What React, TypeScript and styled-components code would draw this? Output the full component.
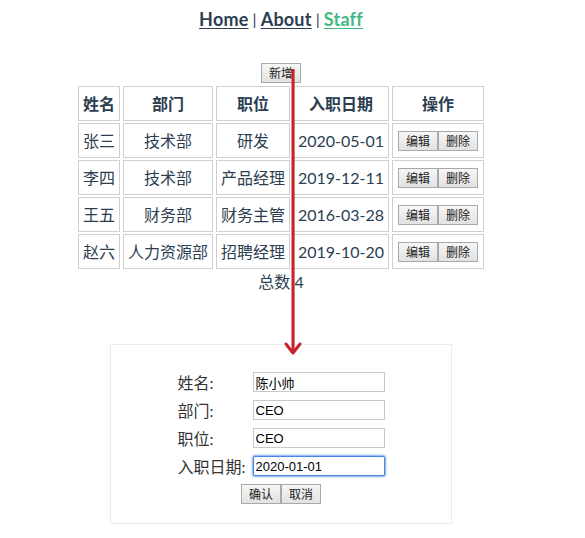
import React from "react";
import styled, { createGlobalStyle } from "styled-components";

const Global = createGlobalStyle`
  html, body { margin: 0; padding: 0; background: #fff; }
  body { font-family: Lato, "Noto Sans CJK SC", sans-serif; color: #2c3e50; }
`;

const Page = styled.div`
  position: relative;
  width: 562px;
  padding-top: 8px;
  display: flex;
  flex-direction: column;
  align-items: center;
  -webkit-font-smoothing: antialiased;
`;

const Nav = styled.nav`
  font-size: 18px;
  line-height: 22px;
  font-weight: 700;
  display: flex;
  gap: 4px;
  align-items: center;
  letter-spacing: 0.2px;
`;

const NavLink = styled.a<{ $active?: boolean }>`
  color: ${(p) => (p.$active ? "#42b983" : "#2c3e50")};
  text-decoration: underline;
  text-underline-offset: 2px;
`;

const Sep = styled.span`
  font-weight: 400;
  font-size: 16px;
`;

const SmallButton = styled.button`
  box-sizing: border-box;
  font-family: "Noto Sans CJK SC", sans-serif;
  font-size: 12px;
  height: 20px;
  padding: 0 7px;
  line-height: 18px;
  color: #222;
  background: linear-gradient(#f6f6f6, #e2e2e2);
  border: 1px solid #a9a9a9;
  border-radius: 0;
  margin: 0;
`;

const AddButton = styled(SmallButton)`
  margin-top: 33px;
`;

const Table = styled.table`
  border-collapse: separate;
  border-spacing: 3px 2px;
  margin-top: 1px;
  font-size: 16px;
`;

const Th = styled.th`
  border: 1px solid #cfcfcf;
  padding: 6px 4px;
  line-height: 21px;
  font-weight: 700;
  text-align: center;
`;

const Td = styled.td`
  border: 1px solid #cfcfcf;
  padding: 6px 4px;
  line-height: 21px;
  text-align: center;
  white-space: nowrap;
`;

const ActionCell = styled(Td)`
  padding: 6px 5px;
`;

const Actions = styled.div`
  display: flex;
  justify-content: center;
`;

const Total = styled.div`
  font-size: 16px;
  line-height: 22px;
`;

const FormBox = styled.div`
  margin-top: 51px;
  width: 340px;
  border: 1px solid #ececec;
  padding: 27px 0 19px;
  display: flex;
  flex-direction: column;
  align-items: center;
  gap: 8px;
`;

const FormRow = styled.div`
  display: flex;
  align-items: center;
  height: 20px;
`;

const Label = styled.label`
  width: 75px;
  font-size: 16px;
  color: #333;
`;

const Input = styled.input<{ $focus?: boolean }>`
  box-sizing: border-box;
  width: 132px;
  height: 20px;
  font-family: "Liberation Sans", "Noto Sans CJK SC", sans-serif;
  font-size: 13px;
  color: #000;
  padding: 0 2px;
  border: 1px solid ${(p) => (p.$focus ? "#4a84e0" : "#c8c8c8")};
  box-shadow: ${(p) => (p.$focus ? "0 0 2px 1px #7fa9ef" : "none")};
  border-radius: ${(p) => (p.$focus ? "2px" : "0")};
  outline: none;
  margin: 0;
`;

const ButtonRow = styled.div`
  display: flex;
`;

const Arrow = styled.svg`
  position: absolute;
  left: 283px;
  top: 66px;
  pointer-events: none;
  overflow: visible;
`;

const rows = [
  ["张三", "技术部", "研发", "2020-05-01"],
  ["李四", "技术部", "产品经理", "2019-12-11"],
  ["王五", "财务部", "财务主管", "2016-03-28"],
  ["赵六", "人力资源部", "招聘经理", "2019-10-20"],
];

export default function App() {
  return (
    <Page>
      <Global />
      <Nav>
        <NavLink>Home</NavLink>
        <Sep>|</Sep>
        <NavLink>About</NavLink>
        <Sep>|</Sep>
        <NavLink $active>Staff</NavLink>
      </Nav>
      <AddButton>新增</AddButton>
      <Table>
        <thead>
          <tr>
            <Th>姓名</Th>
            <Th>部门</Th>
            <Th>职位</Th>
            <Th>入职日期</Th>
            <Th>操作</Th>
          </tr>
        </thead>
        <tbody>
          {rows.map((r) => (
            <tr key={r[0]}>
              {r.map((c, i) => (
                <Td key={i}>{c}</Td>
              ))}
              <ActionCell>
                <Actions>
                  <SmallButton>编辑</SmallButton>
                  <SmallButton>删除</SmallButton>
                </Actions>
              </ActionCell>
            </tr>
          ))}
        </tbody>
      </Table>
      <Total>总数 4</Total>
      <FormBox>
        <FormRow>
          <Label>姓名:</Label>
          <Input defaultValue="陈小帅" />
        </FormRow>
        <FormRow>
          <Label>部门:</Label>
          <Input defaultValue="CEO" />
        </FormRow>
        <FormRow>
          <Label>职位:</Label>
          <Input defaultValue="CEO" />
        </FormRow>
        <FormRow>
          <Label>入职日期:</Label>
          <Input $focus defaultValue="2020-01-01" />
        </FormRow>
        <ButtonRow>
          <SmallButton>确认</SmallButton>
          <SmallButton>取消</SmallButton>
        </ButtonRow>
      </FormBox>
      <Arrow width="20" height="292" viewBox="0 0 20 292">
        <line x1="10.5" y1="4" x2="10.5" y2="284" stroke="#00000022" strokeWidth="3" />
        <line x1="10" y1="3" x2="10" y2="286" stroke="#c8232c" strokeWidth="3" />
        <path d="M3 278 L10 287 L17 278" fill="none" stroke="#c8232c" strokeWidth="3" strokeLinecap="round" strokeLinejoin="round" />
      </Arrow>
    </Page>
  );
}
